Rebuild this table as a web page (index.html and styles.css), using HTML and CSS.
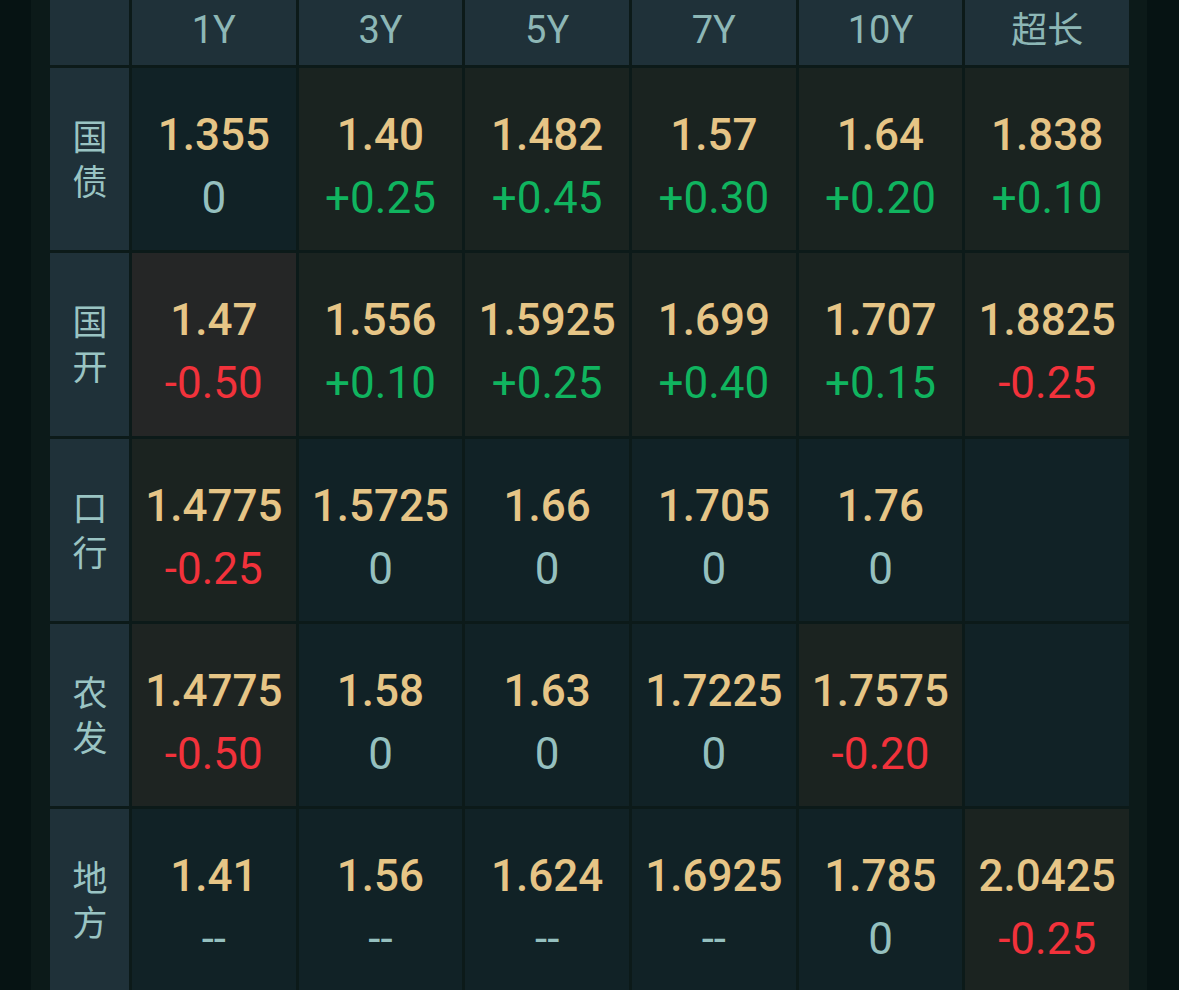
FILE: index.html
```html
<!DOCTYPE html>
<html lang="zh">
<head>
<meta charset="utf-8">
<title>收益率</title>
<link rel="stylesheet" href="styles.css">
</head>
<body>
<div class="outer">
  <div class="panel">
    <div class="grid">
      <div class="hd"></div>
      <div class="hd">1Y</div>
      <div class="hd">3Y</div>
      <div class="hd">5Y</div>
      <div class="hd">7Y</div>
      <div class="hd">10Y</div>
      <div class="hd cjk">超长</div>

      <div class="lab"><span class="vt">国债</span></div>
      <div class="cell"><span class="y">1.355</span><span class="c z">0</span></div>
      <div class="cell pos"><span class="y">1.40</span><span class="c up">+0.25</span></div>
      <div class="cell pos"><span class="y">1.482</span><span class="c up">+0.45</span></div>
      <div class="cell pos"><span class="y">1.57</span><span class="c up">+0.30</span></div>
      <div class="cell pos"><span class="y">1.64</span><span class="c up">+0.20</span></div>
      <div class="cell pos"><span class="y">1.838</span><span class="c up">+0.10</span></div>

      <div class="lab"><span class="vt">国开</span></div>
      <div class="cell negs"><span class="y">1.47</span><span class="c dn">-0.50</span></div>
      <div class="cell pos"><span class="y">1.556</span><span class="c up">+0.10</span></div>
      <div class="cell pos"><span class="y">1.5925</span><span class="c up">+0.25</span></div>
      <div class="cell pos"><span class="y">1.699</span><span class="c up">+0.40</span></div>
      <div class="cell pos"><span class="y">1.707</span><span class="c up">+0.15</span></div>
      <div class="cell neg"><span class="y">1.8825</span><span class="c dn">-0.25</span></div>

      <div class="lab"><span class="vt">口行</span></div>
      <div class="cell neg"><span class="y">1.4775</span><span class="c dn">-0.25</span></div>
      <div class="cell"><span class="y">1.5725</span><span class="c z">0</span></div>
      <div class="cell"><span class="y">1.66</span><span class="c z">0</span></div>
      <div class="cell"><span class="y">1.705</span><span class="c z">0</span></div>
      <div class="cell"><span class="y">1.76</span><span class="c z">0</span></div>
      <div class="cell"></div>

      <div class="lab"><span class="vt">农发</span></div>
      <div class="cell negm"><span class="y">1.4775</span><span class="c dn">-0.50</span></div>
      <div class="cell"><span class="y">1.58</span><span class="c z">0</span></div>
      <div class="cell"><span class="y">1.63</span><span class="c z">0</span></div>
      <div class="cell"><span class="y">1.7225</span><span class="c z">0</span></div>
      <div class="cell neg"><span class="y">1.7575</span><span class="c dn">-0.20</span></div>
      <div class="cell"></div>

      <div class="lab"><span class="vt">地方</span></div>
      <div class="cell"><span class="y">1.41</span><span class="c z">--</span></div>
      <div class="cell"><span class="y">1.56</span><span class="c z">--</span></div>
      <div class="cell"><span class="y">1.624</span><span class="c z">--</span></div>
      <div class="cell"><span class="y">1.6925</span><span class="c z">--</span></div>
      <div class="cell"><span class="y">1.785</span><span class="c z">0</span></div>
      <div class="cell neg"><span class="y">2.0425</span><span class="c dn">-0.25</span></div>
    </div>
  </div>
</div>
</body>
</html>
```
FILE: styles.css
```css
html, body {
  margin: 0;
  padding: 0;
  background: #061313;
  height: 990px;
  overflow: hidden;
}
body {
  font-family: Roboto, "Noto Sans CJK SC", sans-serif;
}
.outer {
  padding: 0 32px 0 31px;
}
.panel {
  background: #0c1a19;
  padding: 0 18px 0 19px;
  height: 990px;
}
.grid {
  display: grid;
  grid-template-columns: 79px repeat(6, 1fr);
  grid-template-rows: 65px repeat(5, 182.25px);
  gap: 3px;
}
.hd {
  background: #1f3139;
  color: #8db7b6;
  font-size: 38px;
  line-height: 40px;
  display: flex;
  align-items: center;
  justify-content: center;
  padding-bottom: 6px;
  box-sizing: border-box;
  font-family: Roboto, "Noto Sans CJK SC", sans-serif;
}
.hd.cjk {
  font-family: "Noto Sans CJK SC", sans-serif;
  font-size: 36px;
  padding-bottom: 12px;
}
.lab {
  background: #1f3139;
  color: #9ac4c3;
  font-family: "Noto Sans CJK SC", sans-serif;
  font-size: 35px;
  display: flex;
  align-items: center;
  justify-content: center;
}
.vt {
  writing-mode: vertical-rl;
  text-orientation: upright;
  letter-spacing: 10px;
  line-height: 40px;
  margin-bottom: -10px;
}
.cell {
  background: #112226;
  display: flex;
  flex-direction: column;
  align-items: center;
  padding-top: 36px;
  box-sizing: border-box;
  font-size: 44px;
  line-height: 63px;
}
.cell.pos { background: #1a2320; }
.cell.neg { background: #1b2320; }
.cell.negm { background: #1e2422; }
.cell.negs { background: #252626; }
.y {
  color: #e6c586;
  font-weight: 500;
}
.c { font-weight: 400; }
.z { color: #95c0bf; }
.up { color: #10b45f; }
.dn { color: #f2323b; }
```
